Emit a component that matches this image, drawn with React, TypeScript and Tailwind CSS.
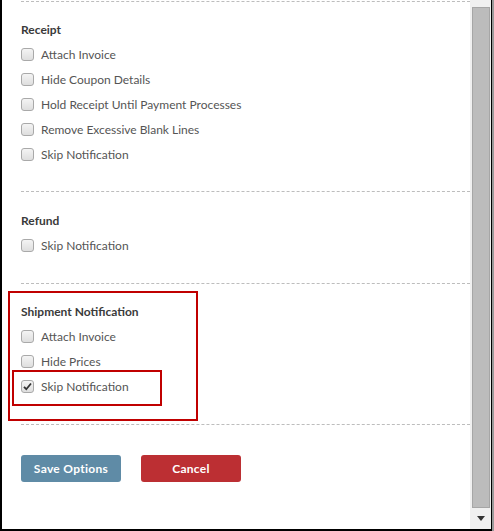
import React from 'react';

type Option = { label: string; checked?: boolean };

const sections: { title: string; pad: string; options: Option[] }[] = [
  {
    title: 'Receipt',
    pad: 'pt-[15px] pb-[24px]',
    options: [
      { label: 'Attach Invoice' },
      { label: 'Hide Coupon Details' },
      { label: 'Hold Receipt Until Payment Processes' },
      { label: 'Remove Excessive Blank Lines' },
      { label: 'Skip Notification' },
    ],
  },
  { title: 'Refund', pad: 'pt-[16px] pb-[25px]', options: [{ label: 'Skip Notification' }] },
  {
    title: 'Shipment Notification',
    pad: 'pt-[15px] pb-[25px]',
    options: [
      { label: 'Attach Invoice' },
      { label: 'Hide Prices' },
      { label: 'Skip Notification', checked: true },
    ],
  },
];

const Checkbox = ({ checked }: { checked?: boolean }) => (
  <span className="w-[13px] h-[13px] rounded-[3px] border border-[#a9a9a9] bg-gradient-to-b from-[#f4f4f4] to-[#dedede] flex items-center justify-center shrink-0">
    {checked && (
      <svg width="9" height="9" viewBox="0 0 9 9">
        <path d="M1 4.8 L3.3 7.2 L8 1.5" fill="none" stroke="#333" strokeWidth="1.8" />
      </svg>
    )}
  </span>
);

export default function App() {
  return (
    <div className="w-[494px] h-[531px] bg-[#9a9a9a] font-['Lato','Liberation_Sans',sans-serif]">
      <div className="w-[492px] h-[531px] bg-white border-l-2 border-r border-b-2 border-black flex">
        {/* content */}
        <div className="flex-1 flex flex-col pt-px">
          {sections.map(s => (
            <div key={s.title} className={`relative ml-[19px] border-t border-dashed border-[#bdbdbd] ${s.pad}`}>
              <div className="h-[25px] flex items-center text-[12px] font-bold text-[#3a3a3a]">{s.title}</div>
              {s.options.map(o => (
                <div key={o.label} className="h-[25px] flex items-center gap-[7px] text-[12px] text-[#555]">
                  <Checkbox checked={o.checked} />
                  <span>{o.label}</span>
                </div>
              ))}
              {s.title === 'Shipment Notification' && (
                <>
                  <div className="absolute left-[-13px] top-[7px] w-[190px] h-[130px] border-2 border-[#c00000]" />
                  <div className="absolute left-[-9px] top-[86px] w-[150px] h-[36px] border-2 border-[#c00000]" />
                </>
              )}
            </div>
          ))}
          <div className="ml-[19px] border-t border-dashed border-[#bdbdbd] pt-[30px] flex gap-[20px]">
            <button className="w-[100px] h-[27px] rounded-[3px] bg-[#5f8ba6] text-white text-[12px] font-bold tracking-[0.3px]">
              Save Options
            </button>
            <button className="w-[100px] h-[27px] rounded-[3px] bg-[#bc2f33] text-white text-[12px] font-bold tracking-[0.3px]">
              Cancel
            </button>
          </div>
        </div>
        {/* scrollbar */}
        <div className="w-[21px] bg-[#f0f0f0] flex flex-col items-center pt-[7px]">
          <div className="w-[18px] h-[501px] bg-[#bcbcbc] border border-[#a6a6a6]" />
          <div className="flex-1 flex items-center justify-center">
            <svg width="8" height="5" viewBox="0 0 8 5">
              <path d="M0 0 H8 L4 5 Z" fill="#333" />
            </svg>
          </div>
        </div>
      </div>
    </div>
  );
}
